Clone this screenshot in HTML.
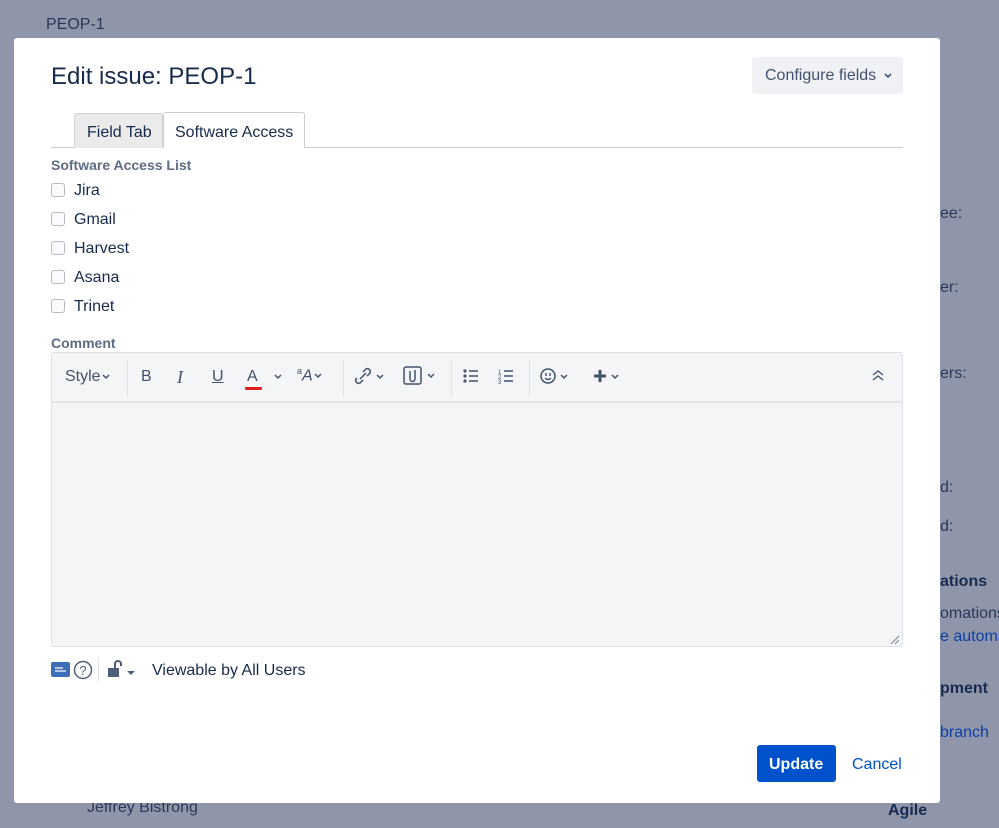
<!DOCTYPE html>
<html><head><meta charset="utf-8"><style>
*{box-sizing:border-box;margin:0;padding:0}
body{width:999px;height:828px;background:#8f96aa;font-family:"Liberation Sans",sans-serif;position:relative;overflow:hidden;color:#172b4d}
.a{position:absolute;white-space:nowrap}
.bg{color:#2a3858;font-size:16px}
.modal{position:absolute;left:14px;top:38px;width:926px;height:765px;background:#fff;border-radius:3px}
.chk{position:absolute;left:37px;width:14px;height:14px;border:1px solid #b3bac5;border-radius:3px;background:#fafbfc}
.lbl{position:absolute;left:60px;font-size:16px;color:#172b4d}
.tb{position:absolute;top:0;color:#42526e;font-size:16px}
.sep{position:absolute;top:7px;width:1px;height:36px;background:#dfe1e6}
</style></head><body>
<div class="a bg" style="left:46px;top:16px">PEOP-1</div>
<div class="a bg" style="left:940px;top:205px">ee:</div>
<div class="a bg" style="left:940px;top:279px">er:</div>
<div class="a bg" style="left:940px;top:365px">ers:</div>
<div class="a bg" style="left:940px;top:479px">d:</div>
<div class="a bg" style="left:940px;top:518px">d:</div>
<div class="a" style="left:940px;top:573px;font-size:16px;font-weight:bold;color:#172b4d">ations</div>
<div class="a bg" style="left:940px;top:605px">omations</div>
<div class="a" style="left:940px;top:628px;font-size:16px;color:#0b3ea8">e automa</div>
<div class="a" style="left:940px;top:680px;font-size:16px;font-weight:bold;color:#172b4d">pment</div>
<div class="a" style="left:940px;top:724px;font-size:16px;color:#0b3ea8">branch</div>
<div class="a bg" style="left:87px;top:799px">Jeffrey Bistrong</div>
<div class="a" style="left:888px;top:802px;font-size:16px;font-weight:bold;color:#172b4d">Agile</div>

<div class="modal">
 <div class="a" style="left:37px;top:25px;font-size:24px;color:#172b4d">Edit issue: PEOP-1</div>
 <div class="a" style="left:738px;top:19px;width:151px;height:37px;background:#f0f1f4;border-radius:3px;color:#42526e;font-size:16px;padding:10px 0 0 13px">Configure fields <svg width="10" height="8" viewBox="0 0 10 8" style="margin-left:2px"><path d="M2 2l3 3 3-3" stroke="#42526e" stroke-width="1.6" fill="none"/></svg></div>
 <div class="a" style="left:37px;top:109px;width:852px;height:1px;background:#c9ccd2"></div>
 <div class="a" style="left:60px;top:75px;width:89px;height:35px;background:#ebebeb;border:1px solid #d0d2d6;border-bottom:none;border-radius:3px 3px 0 0;font-size:16px;color:#172b4d;padding:10px 0 0 12px">Field Tab</div>
 <div class="a" style="left:149px;top:74px;width:142px;height:36px;background:#fff;border:1px solid #c9ccd2;border-bottom:1px solid #fff;border-radius:3px 3px 0 0;font-size:16px;color:#172b4d;padding:11px 0 0 11px">Software Access</div>
 <div class="a" style="left:37px;top:119px;font-size:14px;font-weight:bold;color:#5e6c84">Software Access List</div>
 <div class="chk" style="top:145px"></div><div class="lbl" style="top:144px">Jira</div>
 <div class="chk" style="top:174px"></div><div class="lbl" style="top:173px">Gmail</div>
 <div class="chk" style="top:203px"></div><div class="lbl" style="top:202px">Harvest</div>
 <div class="chk" style="top:232px"></div><div class="lbl" style="top:231px">Asana</div>
 <div class="chk" style="top:261px"></div><div class="lbl" style="top:260px">Trinet</div>
 <div class="a" style="left:37px;top:297px;font-size:14px;font-weight:bold;color:#5e6c84">Comment</div>
 <div class="a" style="left:37px;top:314px;width:852px;height:295px;border:1px solid #dfe1e6;border-radius:3px;background:#f4f5f7">
  <div class="a" style="left:0;top:0;width:850px;height:50px;border-bottom:2px solid #e4e6ea">
   <div class="tb" style="left:13px;top:15px">Style<svg width="10" height="8" viewBox="0 0 10 8"><path d="M2 2l3 3 3-3" stroke="#42526e" stroke-width="1.5" fill="none"/></svg></div>
   <div class="sep" style="left:75px"></div>
   <div class="tb" style="left:89px;top:15px">B</div>
   <div class="tb" style="left:125px;top:14px;font-family:'Liberation Serif',serif;font-style:italic;font-size:18px">I</div>
   <div class="tb" style="left:160px;top:15px;text-decoration:underline">U</div>
   <div class="tb" style="left:195px;top:15px">A</div>
   <div class="a" style="left:193px;top:34px;width:17px;height:3px;background:#e01e1e;border-radius:1px"></div>
   <div class="tb" style="left:221px;top:15px"><svg width="10" height="8" viewBox="0 0 10 8"><path d="M2 2l3 3 3-3" stroke="#42526e" stroke-width="1.5" fill="none"/></svg></div>
   <div class="tb" style="left:245px;top:13px;font-size:16px"><sup style="font-size:9px">a</sup><i>A</i><svg width="10" height="8" viewBox="0 0 10 8"><path d="M2 2l3 3 3-3" stroke="#42526e" stroke-width="1.5" fill="none"/></svg></div>
   <div class="sep" style="left:291px"></div>
   <svg class="a" style="left:300px;top:13px" width="40" height="22" viewBox="0 0 40 22"><path d="M8 13l6-6M5 12l-1 1a3 3 0 004 4l3-3M11 6l3-3a3 3 0 014 4l-3 3" stroke="#42526e" stroke-width="1.5" fill="none"/><path d="M25 9l3 3 3-3" stroke="#42526e" stroke-width="1.5" fill="none"/></svg>
   <svg class="a" style="left:350px;top:12px" width="40" height="22" viewBox="0 0 40 22"><rect x="2" y="2" width="17" height="17" rx="2" stroke="#42526e" stroke-width="1.5" fill="none"/><path d="M8 6v8a2.5 2.5 0 005 0V5" stroke="#42526e" stroke-width="1.5" fill="none"/><path d="M26 9l3 3 3-3" stroke="#42526e" stroke-width="1.5" fill="none"/></svg>
   <div class="sep" style="left:399px"></div>
   <svg class="a" style="left:410px;top:14px" width="20" height="18" viewBox="0 0 20 18"><circle cx="3" cy="4" r="1.6" fill="#42526e"/><circle cx="3" cy="9" r="1.6" fill="#42526e"/><circle cx="3" cy="14" r="1.6" fill="#42526e"/><path d="M7 4h9M7 9h9M7 14h9" stroke="#42526e" stroke-width="1.4"/></svg>
   <svg class="a" style="left:446px;top:14px" width="20" height="18" viewBox="0 0 20 18"><text x="0" y="7" font-size="6" fill="#42526e" font-family="Liberation Sans">1</text><text x="0" y="12" font-size="6" fill="#42526e" font-family="Liberation Sans">2</text><text x="0" y="17" font-size="6" fill="#42526e" font-family="Liberation Sans">3</text><path d="M6 4h9M6 9h9M6 14h9" stroke="#42526e" stroke-width="1.4"/></svg>
   <div class="sep" style="left:477px"></div>
   <svg class="a" style="left:487px;top:13px" width="36" height="22" viewBox="0 0 36 22"><circle cx="9" cy="10" r="7" stroke="#42526e" stroke-width="1.5" fill="none"/><path d="M7 7v3M11 7v3M6 12q3 3 6 0" stroke="#42526e" stroke-width="1.4" fill="none"/><path d="M22 9l3 3 3-3" stroke="#42526e" stroke-width="1.5" fill="none"/></svg>
   <svg class="a" style="left:540px;top:13px" width="36" height="22" viewBox="0 0 36 22"><path d="M8 4v12M2 10h12" stroke="#42526e" stroke-width="3"/><path d="M20 9l3 3 3-3" stroke="#42526e" stroke-width="1.5" fill="none"/></svg>
   <svg class="a" style="left:819px;top:16px" width="14" height="14" viewBox="0 0 14 14"><path d="M2 6l5-4 5 4M2 11l5-4 5 4" stroke="#42526e" stroke-width="1.3" fill="none"/></svg>
  </div>
  <svg class="a" style="left:838px;top:282px" width="10" height="10" viewBox="0 0 10 10"><path d="M1 9l8-8M5 9l4-4" stroke="#7a869a" stroke-width="1"/></svg>
 </div>
 <svg class="a" style="left:37px;top:624px" width="20" height="16" viewBox="0 0 20 16"><rect x="0" y="0" width="19" height="15" rx="2" fill="#3e6eb5"/><path d="M4 6h8M4 9h11" stroke="#fff" stroke-width="1.3"/></svg>
 <svg class="a" style="left:59px;top:622px" width="20" height="20" viewBox="0 0 20 20"><circle cx="10" cy="10" r="8.5" stroke="#505f79" stroke-width="1.5" fill="none"/><text x="10" y="15" font-size="13" text-anchor="middle" fill="#505f79" font-family="Liberation Sans">?</text></svg>
 <div class="a" style="left:84px;top:620px;width:1px;height:24px;background:#dfe1e6"></div>
 <svg class="a" style="left:93px;top:621px" width="32" height="20" viewBox="0 0 32 20"><rect x="1" y="9" width="11" height="9" fill="#505f79"/><path d="M8 9V5a3 3 0 016 0v2" stroke="#505f79" stroke-width="2" fill="none"/><path d="M20 12h8l-4 4z" fill="#505f79"/></svg>
 <div class="a" style="left:138px;top:624px;font-size:16px;color:#172b4d">Viewable by All Users</div>
 <div class="a" style="left:743px;top:707px;width:79px;height:37px;background:#0052cc;border-radius:3px;color:#fff;font-size:16px;font-weight:bold;padding:11px 0 0 12px">Update</div>
 <div class="a" style="left:838px;top:718px;font-size:16px;color:#0052cc">Cancel</div>
</div>
</body></html>
